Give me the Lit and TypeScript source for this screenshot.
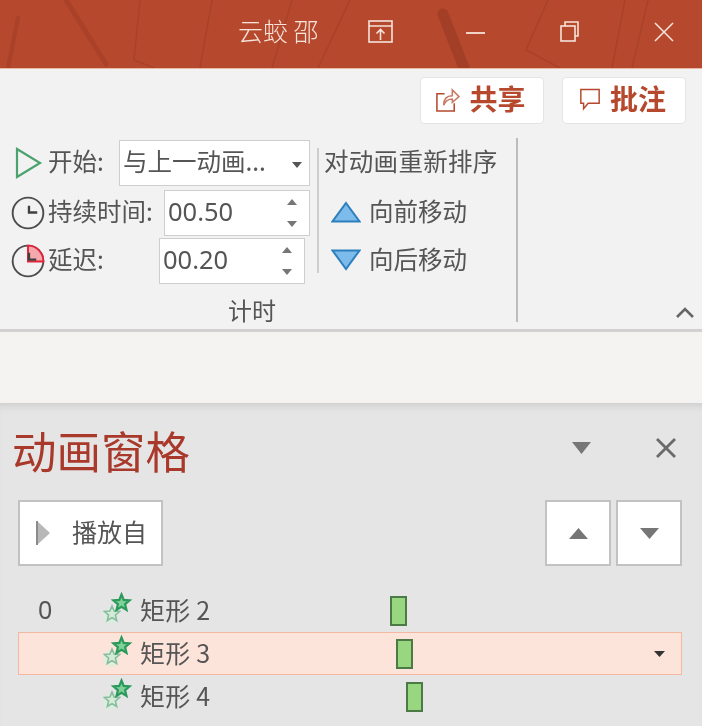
import { LitElement, html, css, svg } from "lit";
import { customElement } from "lit/decorators.js";

const star = (cx: number, cy: number, r: number) => {
  const pts: string[] = [];
  for (let i = 0; i < 10; i++) {
    const rad = i % 2 === 0 ? r : r * 0.45;
    const a = -Math.PI / 2 + (i * Math.PI) / 5;
    pts.push(`${(cx + rad * Math.cos(a)).toFixed(1)},${(cy + rad * Math.sin(a)).toFixed(1)}`);
  }
  return pts.join(" ");
};

const starsIcon = svg`<svg class="stars" width="32" height="34" viewBox="0 0 32 34">
  <circle cx="8" cy="24" r="8" fill="#d9f0dd" opacity=".7"></circle>
  <polygon points="${star(9, 22, 8)}" fill="#d5ebd8" stroke="#86bd9c" stroke-width="1.6"></polygon>
  <polygon points="${star(18.5, 11, 8.5)}" fill="#7fd09a" stroke="#2a9a5a" stroke-width="2.2"></polygon>
</svg>`;

const clock = (wedge: boolean) => svg`<svg class="clock" width="34" height="34" viewBox="0 0 35 35">
  <circle cx="17.5" cy="17.5" r="15.8" fill="none" stroke="#4d4d4d" stroke-width="2"></circle>
  ${wedge ? svg`<path d="M17.5 1.7A15.8 15.8 0 0 1 33.3 18H17.5Z" fill="#f5a9ad" stroke="#e3243b" stroke-width="2"></path>` : ""}
  <path d="${wedge ? "M18.5 9V16H26" : "M18.5 10V17H27"}" fill="none" stroke="#3f3f3f" stroke-width="2.4"></path>
</svg>`;

const tri = (up: boolean, w = 12, h = 7, fill = "#767676") =>
  svg`<svg width="${w}" height="${h}" viewBox="0 0 ${w} ${h}"><polygon points="${up ? `0,${h} ${w},${h} ${w / 2},0` : `0,0 ${w},0 ${w / 2},${h}`}" fill="${fill}"></polygon></svg>`;

@customElement("app-root")
export class AppRoot extends LitElement {
  static styles = css`
    :host {
      display: block;
      width: 702px;
      height: 726px;
      overflow: hidden;
      font-family: "Noto Sans CJK SC", "Noto Sans", sans-serif;
      font-size: 24.5px;
      line-height: 1;
      color: #555;
      background: #f4f2f2;
      filter: blur(0.45px);
    }
    .titlebar {
      position: relative;
      height: 69px;
      box-sizing: border-box;
      border-bottom: 1px solid #e9b9a4;
      background: #b5482d;
      display: flex;
      align-items: center;
      padding: 0 0 5px 238px;
      color: #f6e3da;
      overflow: hidden;
    }
    .streaks {
      position: absolute;
      left: 0;
      top: 0;
    }
    .doc {
      position: relative;
      width: 80px;
      font-size: 25px;
      font-weight: 300;
      white-space: nowrap;
      margin-right: 50px;
      padding-bottom: 3px;
    }
    .winbtn {
      position: relative;
      display: block;
      margin-right: 75px;
      flex: none;
    }
    .winbtn.last { margin-right: 0; }
    .ribbon {
      height: 263px;
      box-sizing: border-box;
      border-bottom: 3px solid #d2d0d0;
      background: #f3f2f2;
      display: flex;
      flex-direction: column;
    }
    .top {
      display: flex;
      justify-content: flex-end;
      gap: 18px;
      padding: 8px 16px 0 0;
      height: 47px;
      flex: none;
      box-sizing: content-box;
    }
    .pill {
      display: flex;
      align-items: center;
      justify-content: center;
      gap: 9px;
      background: #fff;
      border: 1px solid #e5e3e3;
      border-radius: 4px;
      box-sizing: border-box;
      height: 47px;
      width: 124px;
      color: #b5482d;
      font-size: 28px;
      font-weight: 700;
      padding: 0 3px 2px 0;
    }
    .pill span { padding-bottom: 3px; }
    .body {
      flex: 1;
      display: flex;
      margin-top: 14px;
    }
    .group {
      width: 518px;
      height: 184px;
      box-sizing: border-box;
      border-right: 2px solid #bdbcbc;
      display: flex;
      flex-direction: column;
      flex: none;
    }
    .controls {
      display: flex;
      padding-top: 2px;
      height: 146px;
      box-sizing: border-box;
    }
    .timing {
      width: 317px;
      padding-left: 11px;
      box-sizing: border-box;
      flex: none;
    }
    .row {
      display: flex;
      align-items: center;
      height: 46px;
      box-sizing: border-box;
    }
    .row.r2 { margin-top: 4px; }
    .row.r3 { margin-top: 2px; }
    .ico {
      width: 34px;
      margin-right: 3px;
      display: flex;
      flex: none;
    }
    .lbl { flex: none; white-space: nowrap; padding-bottom: 3px; box-sizing: border-box; }
    .l1 { width: 71px; }
    .l2 { width: 116px; }
    .l3 { width: 111px; }
    .field {
      box-sizing: border-box;
      height: 46px;
      background: #fff;
      border: 1.5px solid #cfcdcd;
      display: flex;
      align-items: center;
      flex: none;
      padding-left: 3px;
      position: relative;
    }
    .w1 { width: 191px; }
    .w2 { width: 146px; }
    .num { font-family: "Noto Sans", sans-serif; font-size: 25.5px; padding-bottom: 3px; }
    .grow { flex: 1; white-space: nowrap; }
    .txt { padding-bottom: 3px; }
    .spin {
      display: flex;
      flex-direction: column;
      align-items: center;
      gap: 16px;
      width: 34px;
    }
    .caret { width: 24px; display: flex; justify-content: center; padding-top: 3px; }
    .sep {
      width: 2px;
      height: 125px;
      margin-top: 8px;
      background: #cfcdcd;
      flex: none;
    }
    .order { padding-left: 5px; letter-spacing: 0.3px; }
    .order .row { padding-bottom: 3px; }
    .order .row.mv { padding-left: 7px; letter-spacing: 0; }
    .mv svg { margin-right: 8px; flex: none; }
    .grouplabel {
      text-align: center;
      width: 504px;
      padding-top: 14px;
      font-size: 24px;
    }
    .more {
      flex: 1;
      display: flex;
      justify-content: flex-end;
      align-items: flex-end;
      padding: 0 8px 4px 0;
      height: 184px;
      box-sizing: border-box;
    }
    .gapband {
      height: 71px;
      background: #f5f3f2;
    }
    .pane {
      height: 323px;
      box-sizing: border-box;
      background: #e6e5e6;
      box-shadow: inset 0 9px 9px -7px #c9c8c8;
      padding: 0 20px 0 18px;
    }
    .panehead {
      display: flex;
      align-items: center;
      height: 97px;
      color: #a8392b;
    }
    .panetitle {
      font-size: 44.5px;
      margin-left: -6px;
      padding-bottom: 3px;
      white-space: nowrap;
      flex: 1;
    }
    .panehead .a { margin-right: 65px; display: flex; padding-bottom: 7px; }
    .panehead .x { display: flex; margin-right: 6px; padding-bottom: 7px; }
    .tools {
      display: flex;
      height: 66px;
      gap: 5px;
    }
    .tbtn {
      box-sizing: border-box;
      height: 66px;
      background: #fff;
      border: 2px solid #c3c2c3;
      display: flex;
      align-items: center;
      justify-content: center;
      flex: none;
    }
    .playbtn {
      width: 145px;
      justify-content: flex-start;
      padding-left: 16px;
      margin-right: auto;
      font-size: 25px;
    }
    .playbtn span { padding-bottom: 3px; }
    .playbtn svg { margin-right: 22px; }
    .sq { width: 66px; }
    .list { margin-top: 23px; }
    .item {
      box-sizing: border-box;
      display: flex;
      align-items: center;
      height: 43px;
      border: 1px solid transparent;
      position: relative;
    }
    .item.sel {
      background: #fde4db;
      border-color: #f3b9a0;
    }
    .idx { width: 84px; padding: 0 0 2px 19px; box-sizing: border-box; font-family: "Noto Sans", sans-serif; font-size: 25px; flex: none; }
    .stars { flex: none; margin-right: 5px; margin-top: -4px; }
    .name { width: 250px; flex: none; white-space: nowrap; font-size: 25px; letter-spacing: 0.2px; padding-bottom: 2px; }
    .bar {
      width: 17px;
      height: 30px;
      box-sizing: border-box;
      background: #98d77f;
      border: 2px solid #4b7a47;
      flex: none;
    }
    .drop { margin-left: auto; margin-right: 16px; display: flex; }
  `;

  render() {
    return html`
      <div class="titlebar">
        <svg class="streaks" width="702" height="68" viewBox="0 0 702 68" fill="none">
          <g stroke="#a94229" stroke-linecap="round">
            <path d="M18 18 8 68" stroke-width="4"></path>
            <path d="M66 0 106 64" stroke-width="5"></path>
            <path d="M140 0 134 60 154 68" stroke-width="1.5"></path>
            <path d="M212 0 200 68" stroke-width="1.5"></path>
            <path d="M292 0 272 68" stroke-width="1.5"></path>
            <path d="M350 0 318 68" stroke-width="1.5"></path>
            <path d="M443 14 464 68" stroke-width="11" stroke="#a43f27"></path>
            <path d="M548 0 526 50 560 68" stroke-width="1.5"></path>
            <path d="M625 0 612 68" stroke-width="1.5"></path>
            <path d="M648 0 632 68" stroke-width="1.5"></path>
          </g>
        </svg>
        <span class="doc">云蛟 邵</span>
        <svg class="winbtn" style="margin-right:73px" width="25" height="23" viewBox="0 0 25 23" fill="none" stroke="#f6e3da" stroke-width="1.6">
          <rect x="1" y="1" width="23" height="21"></rect>
          <path d="M1 6H24M12.5 20V10M8.5 13.5 12.5 9.5 16.5 13.5"></path>
        </svg>
        <svg class="winbtn" width="19" height="20" viewBox="0 0 19 20" fill="none" stroke="#f6e3da" stroke-width="1.8">
          <path d="M0 11H19"></path>
        </svg>
        <svg class="winbtn" width="19" height="21" viewBox="0 0 19 21" fill="none" stroke="#f6e3da" stroke-width="1.6">
          <rect x="1" y="5" width="14" height="15"></rect>
          <path d="M5 5V1H18V15H15"></path>
        </svg>
        <svg class="winbtn last" width="20" height="20" viewBox="0 0 20 20" fill="none" stroke="#f6e3da" stroke-width="1.6">
          <path d="M1 1 19 19M19 1 1 19"></path>
        </svg>
      </div>

      <div class="ribbon">
        <div class="top">
          <div class="pill">
            <svg width="25" height="27" viewBox="0 0 26 28" fill="none" stroke="#b5482d" stroke-width="1.6">
              <path d="M10 8H2V26H20V18"></path>
              <path d="M9 20C9 13 13 10 18 10V4L25 11 18 17V13.5C14 13.5 11 15 9 20Z" stroke="#c77a63"></path>
            </svg>
            <span>共享</span>
          </div>
          <div class="pill">
            <svg width="22" height="25" viewBox="0 0 24 26" fill="none" stroke="#b5482d" stroke-width="1.6">
              <path d="M2 2H22V17H10L5 23V17H2Z"></path>
            </svg>
            <span>批注</span>
          </div>
        </div>
        <div class="body">
          <div class="group">
            <div class="controls">
              <div class="timing">
                <div class="row">
                  <span class="ico">
                    <svg width="28" height="32" viewBox="0 0 28 32" style="margin-left:4px" fill="none" stroke="#4aa36f" stroke-width="2.2">
                      <path d="M2 2 25 16 2 30Z"></path>
                    </svg>
                  </span>
                  <span class="lbl l1">开始:</span>
                  <div class="field w1">
                    <span class="grow txt">与上一动画...</span>
                    <span class="caret">${tri(false, 10, 6, "#555")}</span>
                  </div>
                </div>
                <div class="row r2">
                  <span class="ico">${clock(false)}</span>
                  <span class="lbl l2">持续时间:</span>
                  <div class="field w2">
                    <span class="grow num">00.50</span>
                    <span class="spin">${tri(true, 10, 6)}${tri(false, 10, 6)}</span>
                  </div>
                </div>
                <div class="row r3">
                  <span class="ico">${clock(true)}</span>
                  <span class="lbl l3">延迟:</span>
                  <div class="field w2">
                    <span class="grow num">00.20</span>
                    <span class="spin">${tri(true, 10, 6)}${tri(false, 10, 6)}</span>
                  </div>
                </div>
              </div>
              <div class="sep"></div>
              <div class="order">
                <div class="row">对动画重新排序</div>
                <div class="row r2 mv">
                  <svg width="30" height="22" viewBox="0 0 30 22"><polygon points="15,2 28.5,20.5 1.5,20.5" fill="#7dbbea" stroke="#2c80bd" stroke-width="2"></polygon></svg>
                  向前移动
                </div>
                <div class="row r3 mv">
                  <svg width="30" height="22" viewBox="0 0 30 22"><polygon points="1.5,1.5 28.5,1.5 15,20" fill="#7dbbea" stroke="#2c80bd" stroke-width="2"></polygon></svg>
                  向后移动
                </div>
              </div>
            </div>
            <div class="grouplabel">计时</div>
          </div>
          <div class="more">
            <svg width="18" height="11" viewBox="0 0 18 11" fill="none" stroke="#666" stroke-width="2.6"><path d="M1 10 9 2 17 10"></path></svg>
          </div>
        </div>
      </div>

      <div class="gapband"></div>

      <div class="pane">
        <div class="panehead">
          <span class="panetitle">动画窗格</span>
          <span class="a">${tri(false, 19, 12)}</span>
          <span class="x">
            <svg width="20" height="20" viewBox="0 0 20 20" fill="none" stroke="#6a6a6a" stroke-width="2.8"><path d="M1 1 19 19M19 1 1 19"></path></svg>
          </span>
        </div>
        <div class="tools">
          <div class="tbtn playbtn">
            <svg width="14" height="24" viewBox="0 0 14 24"><polygon points="1,0 14,12 1,24" fill="#b9b8b8"></polygon><path d="M1 0V24" stroke="#8b8b8b" stroke-width="2"></path></svg>
            <span>播放自</span>
          </div>
          <div class="tbtn sq">${tri(true, 19, 11)}</div>
          <div class="tbtn sq">${tri(false, 19, 11)}</div>
        </div>
        <div class="list">
          ${[
            { idx: "0", name: "矩形 2", off: 0, sel: false },
            { idx: "", name: "矩形 3", off: 6, sel: true },
            { idx: "", name: "矩形 4", off: 16, sel: false },
          ].map(
            (r) => html`
              <div class="item ${r.sel ? "sel" : ""}">
                <span class="idx">${r.idx}</span>
                ${starsIcon}
                <span class="name">${r.name}</span>
                <span class="bar" style="margin-left:${r.off}px"></span>
                ${r.sel ? html`<span class="drop">${tri(false, 11, 6, "#333")}</span>` : ""}
              </div>
            `
          )}
        </div>
      </div>
    `;
  }
}
